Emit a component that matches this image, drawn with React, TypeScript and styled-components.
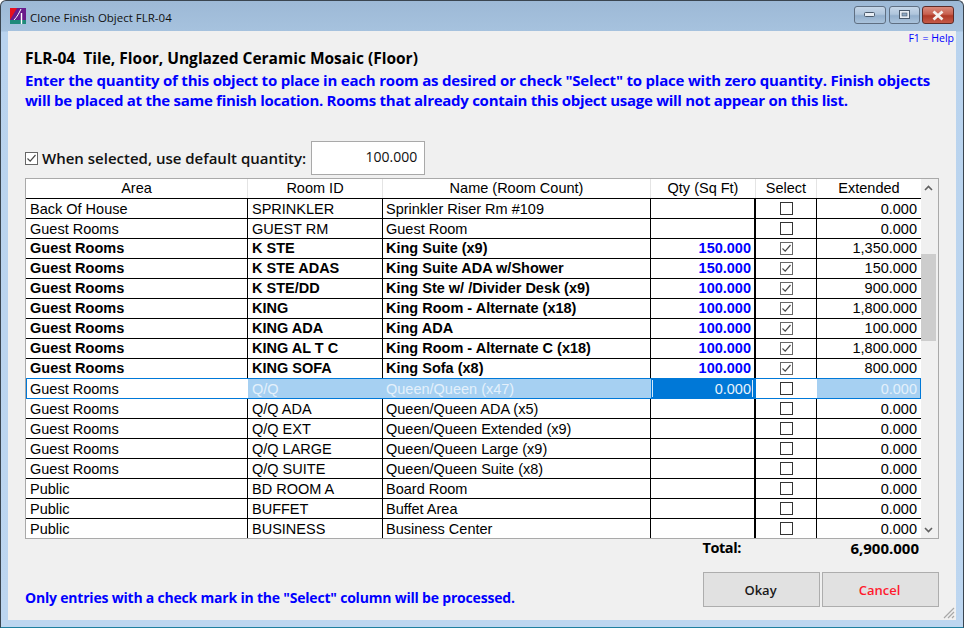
import styled, { createGlobalStyle } from 'styled-components';

interface Room {
  area: string;
  id: string;
  name: string;
  qty?: string;
  checked?: boolean;
  ext: string;
  current?: boolean;
}

const rooms: Room[] = [
  { area: 'Back Of House', id: 'SPRINKLER', name: 'Sprinkler Riser Rm #109', ext: '0.000' },
  { area: 'Guest Rooms', id: 'GUEST RM', name: 'Guest Room', ext: '0.000' },
  { area: 'Guest Rooms', id: 'K STE', name: 'King Suite (x9)', qty: '150.000', checked: true, ext: '1,350.000' },
  { area: 'Guest Rooms', id: 'K STE ADAS', name: 'King Suite ADA w/Shower', qty: '150.000', checked: true, ext: '150.000' },
  { area: 'Guest Rooms', id: 'K STE/DD', name: 'King Ste w/ /Divider Desk (x9)', qty: '100.000', checked: true, ext: '900.000' },
  { area: 'Guest Rooms', id: 'KING', name: 'King Room - Alternate (x18)', qty: '100.000', checked: true, ext: '1,800.000' },
  { area: 'Guest Rooms', id: 'KING ADA', name: 'King ADA', qty: '100.000', checked: true, ext: '100.000' },
  { area: 'Guest Rooms', id: 'KING AL T C', name: 'King Room - Alternate C (x18)', qty: '100.000', checked: true, ext: '1,800.000' },
  { area: 'Guest Rooms', id: 'KING SOFA', name: 'King Sofa (x8)', qty: '100.000', checked: true, ext: '800.000' },
  { area: 'Guest Rooms', id: 'Q/Q', name: 'Queen/Queen (x47)', qty: '0.000', ext: '0.000', current: true },
  { area: 'Guest Rooms', id: 'Q/Q ADA', name: 'Queen/Queen ADA (x5)', ext: '0.000' },
  { area: 'Guest Rooms', id: 'Q/Q EXT', name: 'Queen/Queen Extended (x9)', ext: '0.000' },
  { area: 'Guest Rooms', id: 'Q/Q LARGE', name: 'Queen/Queen Large (x9)', ext: '0.000' },
  { area: 'Guest Rooms', id: 'Q/Q SUITE', name: 'Queen/Queen Suite (x8)', ext: '0.000' },
  { area: 'Public', id: 'BD ROOM A', name: 'Board Room', ext: '0.000' },
  { area: 'Public', id: 'BUFFET', name: 'Buffet Area', ext: '0.000' },
  { area: 'Public', id: 'BUSINESS', name: 'Business Center', ext: '0.000' },
];

const COLS = '222px 135px 268px 105px 61px 104px';
const SELECT_BLUE = '#0078d7';
const SHADE = '#a6d0f2';

const Global = createGlobalStyle`
  html, body { margin: 0; padding: 0; background: #fff; }
  body { font-family: 'Open Sans', 'Noto Sans', sans-serif; }
`;

const Window = styled.div`
  width: 964px;
  height: 628px;
  box-sizing: border-box;
  border: 1px solid #3a4550;
  border-bottom-color: #1f7f9f;
  border-radius: 6px 6px 0 0;
  background: linear-gradient(180deg, #9db9d6 0, #a6c2de 30px, #b9d3ee 31px, #bdd6f0 100%);
  display: flex;
  flex-direction: column;
  overflow: hidden;
`;

const TitleBar = styled.div`
  height: 30px;
  flex: none;
  display: flex;
  align-items: center;
  padding: 0 9px;
`;

const TitleText = styled.div`
  margin-left: 4px;
  flex: 1;
  font-size: 11.5px;
  color: #111;
  position: relative;
  top: 1px;
`;

const CapButtons = styled.div`
  display: flex;
  gap: 3px;
  margin-top: -2px;
`;

const CapButton = styled.div<{ $close?: boolean; $narrow?: boolean }>`
  width: ${p => (p.$narrow ? 31 : 32)}px;
  height: 18px;
  box-sizing: border-box;
  margin-right: ${p => (p.$narrow ? -1 : 0)}px;
  border: 1px solid ${p => (p.$close ? '#5e2a26' : '#5f6f82')};
  border-radius: 3px;
  background: ${p =>
    p.$close
      ? 'linear-gradient(180deg, #d98a7c 0, #c8604f 45%, #b03a28 55%, #c55a48 100%)'
      : 'linear-gradient(180deg, #c5d6e8 0, #afc5dc 45%, #93afcc 55%, #aac3dc 100%)'};
  display: flex;
  align-items: center;
  justify-content: center;
`;

const Client = styled.div`
  width: 948px;
  height: 589px;
  margin-left: 7px;
  flex: none;
  background: #f0f0f0;
  padding: 0 17px;
  box-sizing: border-box;
  position: relative;
  display: flex;
  flex-direction: column;
`;

const HelpLink = styled.div`
  height: 16px;
  margin-right: -15px;
  text-align: right;
  font-size: 10.5px;
  line-height: 14px;
  color: #0000ff;
`;

const Heading = styled.div`
  margin-top: 1px;
  height: 22px;
  font-size: 15.5px;
  line-height: 20px;
  font-weight: 700;
  color: #000;
  white-space: pre;
`;

const Notice = styled.div<{ $spacing: number }>`
  font-size: 15px;
  line-height: 20px;
  font-weight: 700;
  color: #0000ff;
  white-space: nowrap;
  letter-spacing: ${p => p.$spacing}px;
`;

const DefaultRow = styled.div`
  margin-top: 31px;
  height: 34px;
  display: flex;
  align-items: center;
`;

const Box = styled.div<{ $dark?: boolean }>`
  width: 13px;
  height: 13px;
  box-sizing: border-box;
  border: 1px solid ${p => (p.$dark ? '#333' : '#666')};
  background: #fff;
  display: flex;
  align-items: center;
  justify-content: center;
`;

const DefaultLabel = styled.div`
  margin-left: 4px;
  font-size: 15px;
  font-weight: 600;
  color: #111;
`;

const QtyInput = styled.div`
  margin-left: 5px;
  width: 114px;
  height: 34px;
  box-sizing: border-box;
  border: 1px solid #a9a9a9;
  background: #fff;
  font-size: 14px;
  font-weight: 500;
  line-height: 30px;
  text-align: right;
  padding-right: 7px;
  color: #111;
`;

const Table = styled.div`
  margin-top: 3px;
  width: 914px;
  height: 361px;
  box-sizing: border-box;
  border: 1px solid #a9a9a9;
  background: #fff;
  display: flex;
  overflow: hidden;
`;

const Rows = styled.div`
  width: 895px;
  flex: none;
`;

const HeaderRow = styled.div`
  display: grid;
  grid-template-columns: ${COLS};
  height: 20px;
  box-sizing: border-box;
  border-bottom: 1px solid #000;
`;

const HeaderCell = styled.div<{ $last?: boolean }>`
  font: 14.5px/19px 'Liberation Sans', Arial, sans-serif;
  text-align: center;
  color: #000;
  border-right: ${p => (p.$last ? 'none' : '1px solid #e4e4e4')};
`;

const Row = styled.div<{ $bold?: boolean; $current?: boolean }>`
  display: grid;
  grid-template-columns: ${COLS};
  grid-template-rows: 19px;
  height: 20px;
  box-sizing: border-box;
  border-bottom: 1px solid ${p => (p.$current ? SELECT_BLUE : '#000')};
  font: ${p => (p.$bold ? '700 14.5px/18px' : '400 14.5px/20px')} 'Liberation Sans', Arial, sans-serif;
  color: #000;
  box-shadow: ${p => (p.$current ? `0 -1px 0 ${SELECT_BLUE}` : 'none')};
`;

const Cell = styled.div<{ $shaded?: boolean; $noLine?: boolean; $rowStart?: boolean; $inset?: number }>`
  padding: 0 3px 0 ${p => p.$inset ?? 4}px;
  overflow: hidden;
  white-space: nowrap;
  border-right: 1px solid ${p => (p.$noLine ? 'transparent' : '#000')};
  background: ${p => (p.$shaded ? SHADE : 'transparent')};
  color: ${p => (p.$shaded ? '#e4f0fb' : 'inherit')};
  box-shadow: ${p => (p.$rowStart ? `inset 1px 0 0 ${SELECT_BLUE}` : 'none')};
`;

const QtyCell = styled.div<{ $current?: boolean }>`
  padding-right: 3px;
  text-align: right;
  overflow: hidden;
  border-right: 2px solid ${p => (p.$current ? SELECT_BLUE : '#000')};
  color: ${p => (p.$current ? '#e8f3fc' : '#0000ff')};
  background: ${p => (p.$current ? SELECT_BLUE : 'transparent')};
  position: relative;
`;

const Caret = styled.span<{ $side: 'left' | 'right' }>`
  position: absolute;
  top: 1px;
  bottom: 1px;
  ${p => p.$side}: 1px;
  width: 1px;
  background: #d8ebfa;
`;

const SelectCell = styled.div<{ $noLine?: boolean }>`
  display: flex;
  align-items: center;
  justify-content: center;
  border-right: 1px solid ${p => (p.$noLine ? 'transparent' : '#000')};
`;

const ExtCell = styled.div<{ $shaded?: boolean }>`
  padding-right: 4px;
  text-align: right;
  font-weight: 400;
  overflow: hidden;
  background: ${p => (p.$shaded ? SHADE : 'transparent')};
  color: ${p => (p.$shaded ? '#e4f0fb' : 'inherit')};
  box-shadow: ${p => (p.$shaded ? `inset -1px 0 0 ${SELECT_BLUE}` : 'none')};
`;

const ScrollBar = styled.div`
  width: 17px;
  flex: none;
  background: #f0f0f0;
  display: flex;
  flex-direction: column;
`;

const ScrollArrow = styled.div`
  height: 17px;
  flex: none;
  padding-right: 2px;
  display: flex;
  align-items: center;
  justify-content: center;
`;

const ScrollTrack = styled.div`
  flex: 1;
  padding-top: 58px;
`;

const ScrollThumb = styled.div`
  width: 15px;
  height: 87px;
  background: #cdcdcd;
`;

const TotalRow = styled.div`
  display: grid;
  grid-template-columns: 716px 178px;
  height: 20px;
  margin-top: -1px;
  line-height: 20px;
  font-weight: 700;
  color: #000;
`;

const TotalLabel = styled.div`
  font-size: 14.5px;
  text-align: right;
  letter-spacing: -0.4px;
`;

const TotalValue = styled.div`
  font-size: 15px;
  text-align: right;
`;

const Footer = styled.div`
  margin-top: 14px;
  display: flex;
  align-items: flex-start;
  justify-content: space-between;
`;

const FootNote = styled.div`
  margin-top: 16px;
  font-size: 14px;
  line-height: 20px;
  font-weight: 700;
  color: #0000ff;
  letter-spacing: -0.2px;
`;

const Buttons = styled.div`
  display: flex;
  gap: 2px;
`;

const DlgButton = styled.button<{ $cancel?: boolean }>`
  width: 117px;
  height: 35px;
  padding: 0 2px 0 0;
  box-sizing: border-box;
  border: 1px solid #adadad;
  background: #e1e1e1;
  font-family: 'Open Sans', 'Noto Sans', sans-serif;
  font-size: 13px;
  font-weight: 600;
  color: ${p => (p.$cancel ? '#ff1a2e' : '#1a1a1a')};
`;

const Grip = styled.svg`
  position: absolute;
  right: 1px;
  bottom: 1px;
`;

const Check = () => (
  <svg width="11" height="11" viewBox="0 0 11 11">
    <path d="M1.5 5.5 L4.2 8.2 L9.5 2" fill="none" stroke="#4a4a4a" strokeWidth="1.2" />
  </svg>
);

const Chevron = ({ up }: { up?: boolean }) => (
  <svg width="9" height="6" viewBox="0 0 9 6">
    <path d={up ? 'M1 5 L4.5 1.5 L8 5' : 'M1 1 L4.5 4.5 L8 1'} fill="none" stroke="#606060" strokeWidth="1.6" />
  </svg>
);

export default function App() {
  return (
    <>
      <Global />
      <Window>
        <TitleBar>
          <svg width="16" height="16" viewBox="0 0 16 16" style={{ flex: 'none' }}>
            <rect width="16" height="16" fill="#e8101c" />
            <path d="M7 0 H16 V12 H0 Z" fill="#6a1b8a" />
            <rect y="12" width="16" height="4" fill="#1f8a7a" />
            <path d="M4 12 C7 9 9 5 11 1" fill="none" stroke="#fff" strokeWidth="1" />
            <path d="M11.5 5 V16" stroke="#fff" strokeWidth="1.4" />
          </svg>
          <TitleText>Clone Finish Object FLR-04</TitleText>
          <CapButtons>
            <CapButton>
              <svg width="12" height="6" viewBox="0 0 12 6">
                <rect x="0.5" y="0.5" width="10" height="4" rx="1" fill="#e8eef5" stroke="#4a5a6c" />
              </svg>
            </CapButton>
            <CapButton $narrow>
              <svg width="11" height="10" viewBox="0 0 11 10">
                <rect x="0.5" y="0.5" width="10" height="8" fill="#e8eef5" stroke="#4a5a6c" />
                <rect x="3" y="3" width="5" height="3" fill="#8ea8c4" stroke="#4a5a6c" strokeWidth="0.6" />
              </svg>
            </CapButton>
            <CapButton $close>
              <svg width="14" height="11" viewBox="0 0 14 11">
                <path d="M2.5 1.5 L11.5 9.5 M11.5 1.5 L2.5 9.5" stroke="#f4f0ee" strokeWidth="2.8" />
              </svg>
            </CapButton>
          </CapButtons>
        </TitleBar>
        <Client>
          <HelpLink>F1 = Help</HelpLink>
          <Heading>{'FLR-04  Tile, Floor, Unglazed Ceramic Mosaic (Floor)'}</Heading>
          <Notice $spacing={-0.2}>
            Enter the quantity of this object to place in each room as desired or check "Select" to place with zero quantity. Finish objects
          </Notice>
          <Notice $spacing={-0.27}>
            will be placed at the same finish location. Rooms that already contain this object usage will not appear on this list.
          </Notice>
          <DefaultRow>
            <Box>
              <Check />
            </Box>
            <DefaultLabel>When selected, use default quantity:</DefaultLabel>
            <QtyInput>100.000</QtyInput>
          </DefaultRow>
          <Table>
            <Rows>
              <HeaderRow>
                <HeaderCell>Area</HeaderCell>
                <HeaderCell>Room ID</HeaderCell>
                <HeaderCell>Name (Room Count)</HeaderCell>
                <HeaderCell>Qty (Sq Ft)</HeaderCell>
                <HeaderCell>Select</HeaderCell>
                <HeaderCell $last>Extended</HeaderCell>
              </HeaderRow>
              {rooms.map(r => (
                <Row key={r.id} $bold={r.checked} $current={r.current}>
                  <Cell $noLine={r.current} $rowStart={r.current}>{r.area}</Cell>
                  <Cell $shaded={r.current} $noLine={r.current}>{r.id}</Cell>
                  <Cell $shaded={r.current} $noLine={r.current} $inset={3}>{r.name}</Cell>
                  <QtyCell $current={r.current}>
                    {r.current && <Caret $side="left" />}
                    {r.qty}
                    {r.current && <Caret $side="right" />}
                  </QtyCell>
                  <SelectCell $noLine={r.current}>
                    <Box $dark={!r.checked}>{r.checked && <Check />}</Box>
                  </SelectCell>
                  <ExtCell $shaded={r.current}>{r.ext}</ExtCell>
                </Row>
              ))}
            </Rows>
            <ScrollBar>
              <ScrollArrow>
                <Chevron up />
              </ScrollArrow>
              <ScrollTrack>
                <ScrollThumb />
              </ScrollTrack>
              <ScrollArrow>
                <Chevron />
              </ScrollArrow>
            </ScrollBar>
          </Table>
          <TotalRow>
            <TotalLabel>Total:</TotalLabel>
            <TotalValue>6,900.000</TotalValue>
          </TotalRow>
          <Footer>
            <FootNote>Only entries with a check mark in the "Select" column will be processed.</FootNote>
            <Buttons>
              <DlgButton>Okay</DlgButton>
              <DlgButton $cancel>Cancel</DlgButton>
            </Buttons>
          </Footer>
          <Grip width="12" height="12" viewBox="0 0 12 12">
            <path d="M11 1 L1 11 M11 5 L5 11 M11 9 L9 11" stroke="#a8a8a8" strokeWidth="1.2" />
          </Grip>
        </Client>
      </Window>
    </>
  );
}
